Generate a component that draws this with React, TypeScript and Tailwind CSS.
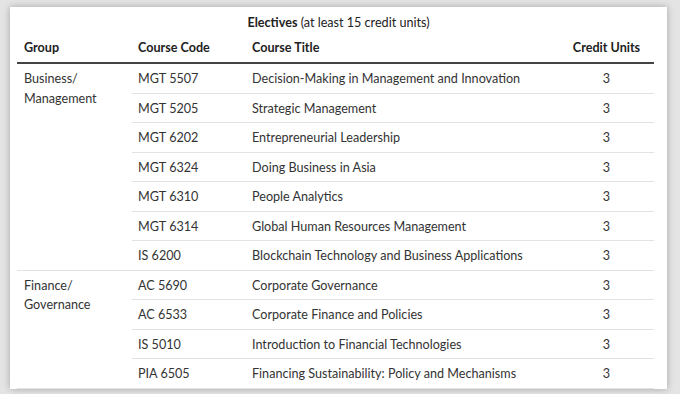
import React from "react";

type Row = { code: string; title: string; cu: string };
type Group = { name: string[]; rows: Row[] };

const groups: Group[] = [
  {
    name: ["Business/", "Management"],
    rows: [
      { code: "MGT 5507", title: "Decision-Making in Management and Innovation", cu: "3" },
      { code: "MGT 5205", title: "Strategic Management", cu: "3" },
      { code: "MGT 6202", title: "Entrepreneurial Leadership", cu: "3" },
      { code: "MGT 6324", title: "Doing Business in Asia", cu: "3" },
      { code: "MGT 6310", title: "People Analytics", cu: "3" },
      { code: "MGT 6314", title: "Global Human Resources Management", cu: "3" },
      { code: "IS 6200", title: "Blockchain Technology and Business Applications", cu: "3" },
    ],
  },
  {
    name: ["Finance/", "Governance"],
    rows: [
      { code: "AC 5690", title: "Corporate Governance", cu: "3" },
      { code: "AC 6533", title: "Corporate Finance and Policies", cu: "3" },
      { code: "IS 5010", title: "Introduction to Financial Technologies", cu: "3" },
      { code: "PIA 6505", title: "Financing Sustainability: Policy and Mechanisms", cu: "3" },
    ],
  },
];

export default function App() {
  return (
    <div
      className="w-[680px] h-[394px] overflow-hidden bg-[#e4e4e4] pt-[7px] pl-[10px]"
      style={{ fontFamily: "Lato, 'Open Sans', sans-serif" }}
    >
      <div className="w-[657px] h-[382px] bg-white shadow-[0_0_7px_rgba(0,0,0,0.28)] px-[7px] pt-[6px] text-[12.6px] text-[#333]">
        <div className="text-center leading-[19.5px] text-[#222]">
          <span className="font-bold">Electives</span> (at least 15 credit units)
        </div>
        <table className="w-[637px] border-collapse table-fixed leading-[19.5px]">
          <colgroup>
            <col className="w-[115px]" />
            <col className="w-[114px]" />
            <col className="w-[313px]" />
            <col className="w-[95px]" />
          </colgroup>
          <thead>
            <tr className="border-b-2 border-[#444]">
              <th className="text-left font-bold text-[#222] pl-[7px] pt-[5px] pb-[5px]">Group</th>
              <th className="text-left font-bold text-[#222] pl-[6px] pt-[5px] pb-[5px]">Course Code</th>
              <th className="text-left font-bold text-[#222] pl-[6px] pt-[5px] pb-[5px]">Course Title</th>
              <th className="text-center font-bold text-[#222] pt-[5px] pb-[5px]">Credit Units</th>
            </tr>
          </thead>
          <tbody>
            {groups.map((g) =>
              g.rows.map((r, i) => (
                <tr key={r.code}>
                  {i === 0 && (
                    <td
                      rowSpan={g.rows.length}
                      className="align-top pl-[7px] py-[5px] border-b border-[#e3e3e3]"
                    >
                      {g.name[0]}
                      <br />
                      {g.name[1]}
                    </td>
                  )}
                  <td className="pl-[6px] pt-[5px] pb-[4px] border-b border-[#e3e3e3]">{r.code}</td>
                  <td className="pl-[6px] pt-[5px] pb-[4px] border-b border-[#e3e3e3]">{r.title}</td>
                  <td className="text-center pt-[5px] pb-[4px] border-b border-[#e3e3e3]">{r.cu}</td>
                </tr>
              ))
            )}
          </tbody>
        </table>
      </div>
    </div>
  );
}
